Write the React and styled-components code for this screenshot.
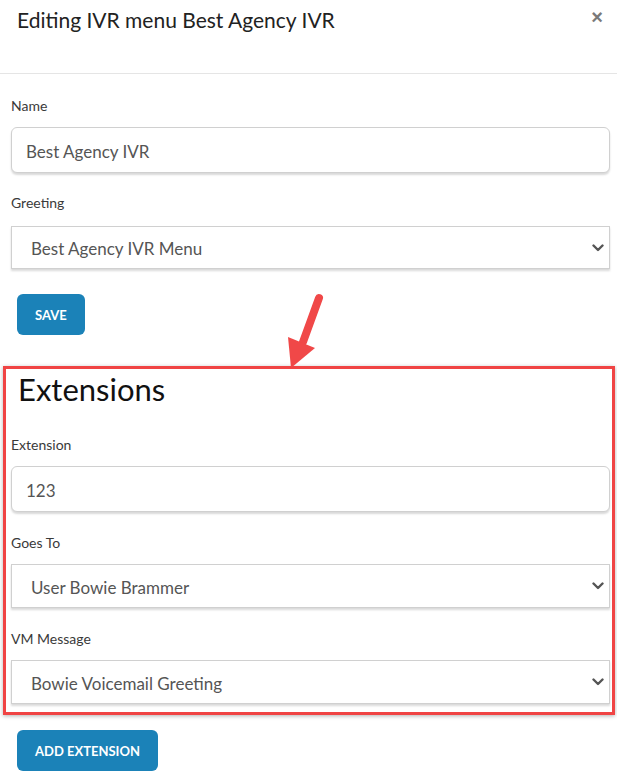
import styled, { createGlobalStyle } from "styled-components";

const GlobalStyle = createGlobalStyle`
  html, body {
    margin: 0;
    padding: 0;
    background: #ffffff;
  }
  body {
    font-family: "Source Sans Pro", Lato, "Noto Sans", sans-serif;
    color: #333;
  }
`;

const Modal = styled.div`
  position: relative;
  width: 617px;
  background: #fff;
`;

const Header = styled.div`
  height: 74px;
  border-bottom: 1px solid #e5e5e5;
  display: flex;
  justify-content: space-between;
  align-items: flex-start;
  padding: 8px 14px 0 17px;
  box-sizing: border-box;
`;

const Title = styled.h4`
  margin: 0;
  font-size: 21px;
  line-height: 24px;
  font-weight: 400;
  color: #222;
`;

const Close = styled.span`
  font-size: 20px;
  line-height: 18px;
  font-weight: 700;
  color: #7a7a7a;
  font-family: "Liberation Sans", Arial, sans-serif;
`;

const Body = styled.div`
  padding: 22px 7px 9px 11px;
`;

const Group = styled.div`
  margin-bottom: ${(p) => p.$gap ?? 20}px;
`;

const Label = styled.label`
  display: block;
  font-size: 14px;
  line-height: 20px;
  color: #3a3a3a;
  margin-bottom: ${(p) => p.$gap ?? 11}px;
`;

const TextInput = styled.input`
  display: block;
  width: 100%;
  box-sizing: border-box;
  height: 46px;
  padding: 2px 14px 0;
  border: 1px solid #d0d0d0;
  border-radius: 6px;
  box-shadow: 0 2px 2px rgba(0, 0, 0, 0.15);
  font-family: inherit;
  font-size: 17px;
  color: #555;
  outline: none;
`;

const SelectWrap = styled.div`
  position: relative;
`;

const Select = styled.select`
  display: block;
  width: 100%;
  box-sizing: border-box;
  height: ${(p) => p.$h || 44}px;
  padding: 2px 40px 0 19px;
  border: 1px solid #d0d0d0;
  border-radius: 0;
  box-shadow: 0 2px 2px rgba(0, 0, 0, 0.15);
  background: #fff;
  appearance: none;
  font-family: inherit;
  font-size: 17px;
  color: #555;
  outline: none;
`;

const Chevron = styled.svg`
  position: absolute;
  right: 6px;
  top: 50%;
  transform: translateY(-50%);
  pointer-events: none;
`;

const Button = styled.button`
  display: block;
  margin-left: 6px;
  height: 41px;
  padding: 0 18px;
  border: none;
  border-radius: 6px;
  background: #1b82b8;
  color: #fff;
  font-family: inherit;
  font-size: 13px;
  font-weight: 700;
  text-transform: uppercase;
  cursor: pointer;
`;

const ExtBox = styled.section`
  margin: 31px -5px 15px -8px;
  border: 3px solid #f04444;
  padding: 2px 2px 8px 5px;
  box-shadow: 0 1px 4px rgba(0, 0, 0, 0.3);
`;

const ExtTitle = styled.h3`
  margin: 0 0 28px 7px;
  font-size: 31px;
  line-height: 36px;
  font-weight: 400;
  color: #111;
`;

const Arrow = styled.svg`
  position: absolute;
  left: 280px;
  top: 290px;
  overflow: visible;
`;

const ChevronIcon = () => (
  <Chevron width="12" height="8" viewBox="0 0 12 8">
    <path d="M1.5 1.5 L6 6 L10.5 1.5" fill="none" stroke="#555" strokeWidth="2.4" strokeLinecap="round" strokeLinejoin="round" />
  </Chevron>
);

const SelectField = ({ value, h }) => (
  <SelectWrap>
    <Select $h={h} defaultValue={value}>
      <option>{value}</option>
    </Select>
    <ChevronIcon />
  </SelectWrap>
);

export default function App() {
  return (
    <>
      <GlobalStyle />
      <Modal>
        <Header>
          <Title>Editing IVR menu Best Agency IVR</Title>
          <Close>×</Close>
        </Header>
        <Body>
          <Group>
            <Label>Name</Label>
            <TextInput defaultValue="Best Agency IVR" />
          </Group>
          <Group $gap={25}>
            <Label $gap={13}>Greeting</Label>
            <SelectField value="Best Agency IVR Menu" h={43} />
          </Group>
          <Button>Save</Button>

          <ExtBox>
            <ExtTitle>Extensions</ExtTitle>
            <Group $gap={21}>
              <Label>Extension</Label>
              <TextInput defaultValue="123" />
            </Group>
            <Group $gap={21}>
              <Label>Goes To</Label>
              <SelectField value="User Bowie Brammer" />
            </Group>
            <Group $gap={0}>
              <Label>VM Message</Label>
              <SelectField value="Bowie Voicemail Greeting" />
            </Group>
          </ExtBox>
          <Button>Add Extension</Button>
        </Body>
        <Arrow width="50" height="85" viewBox="0 0 50 85">
          <line x1="39" y1="8" x2="23" y2="52" stroke="#f04848" strokeWidth="8" strokeLinecap="round" />
          <polygon points="8,47 35,58 11,78" fill="#f04848" />
        </Arrow>
      </Modal>
    </>
  );
}
